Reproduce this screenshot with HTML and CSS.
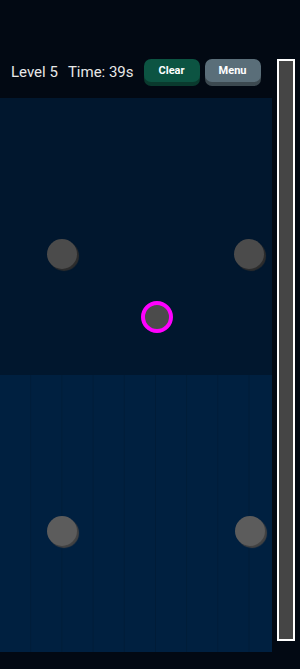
FILE: index.html
```html
<!DOCTYPE html>
<html lang="en">
<head>
<meta charset="UTF-8" />
<meta name="viewport" content="width=device-width, initial-scale=1.0"/>
<title>Dots Game</title>
<link rel="stylesheet" href="styles.css">
</head>
<body>
<div class="app">
    <div class="main">
        <div class="top-bar">
            <span class="stat">Level 5</span>
            <span class="stat">Time: 39s</span>
            <div class="actions">
                <button class="btn btn-clear">Clear</button>
                <button class="btn btn-menu">Menu</button>
            </div>
        </div>

        <div class="board">
            <div class="zone zone-top">
                <div class="dot" style="left: 62px; top: 156px;"></div>
                <div class="dot" style="left: 249px; top: 156px;"></div>
                <div class="dot selected" style="left: 157px; top: 219px;"></div>
            </div>
            <div class="zone zone-bottom">
                <div class="dot" style="left: 62px; top: 156px;"></div>
                <div class="dot" style="left: 250px; top: 156px;"></div>
            </div>
        </div>
    </div>

    <!-- progress / timer column -->
    <div class="side-meter"></div>
</div>
</body>
</html>
```

FILE: styles.css
```css
body, html {
    margin: 0;
    padding: 0;
    width: 100%;
    height: 100%;
    overflow: hidden;
    font-family: Roboto, "Liberation Sans", sans-serif;
    background: #020913;
}

.app {
    display: flex;
    height: 100%;
}

.main {
    width: 272px;
    display: flex;
    flex-direction: column;
}

.top-bar {
    height: 98px;
    box-sizing: border-box;
    padding: 59px 0 0 11px;
    display: flex;
    align-items: flex-start;
    color: #e8e8e8;
}

.stat {
    font-size: 15px;
    line-height: 26px;
    margin-right: 10px;
}

.actions {
    display: flex;
    gap: 5px;
}

.btn {
    width: 56px;
    height: 23px;
    border: none;
    border-radius: 7px;
    color: #fff;
    font-family: Roboto, "Liberation Sans", sans-serif;
    font-weight: bold;
    font-size: 11px;
    padding: 0;
    cursor: pointer;
}

.btn-clear {
    background: #0c5442;
    box-shadow: 0 4px 0 #0a3a2e;
}

.btn-menu {
    background: #5a6e79;
    box-shadow: 0 4px 0 #3c4950;
}

.board {
    height: 554px;
    display: flex;
    flex-direction: column;
}

.zone {
    flex: 1;
    position: relative;
}

.zone-top {
    background: #01172e;
}

/* faint vertical grid on the lower half */
.zone-bottom {
    background-color: #002040;
    background-image: linear-gradient(to right, transparent 30.2px, #001c38 30.2px);
    background-size: 31.2px 100%;
}

.dot {
    position: absolute;
    width: 30px;
    height: 30px;
    margin: -15px 0 0 -15px;
    border-radius: 50%;
    background: #4b4b4b;
    box-shadow: 2px 2px 1px #2d2d2d;
}

.zone-bottom .dot {
    background: #5c5c5c;
    box-shadow: 2px 2px 1px #434343;
}

.dot.selected {
    width: 24px;
    height: 24px;
    margin: -16px 0 0 -16px;
    border: 4px solid #ff00ff;
    box-shadow: none;
}

.side-meter {
    width: 14px;
    height: 578px;
    margin: 59px 0 0 5px;
    border: 2px solid #fff;
    background: #454545;
}
```
